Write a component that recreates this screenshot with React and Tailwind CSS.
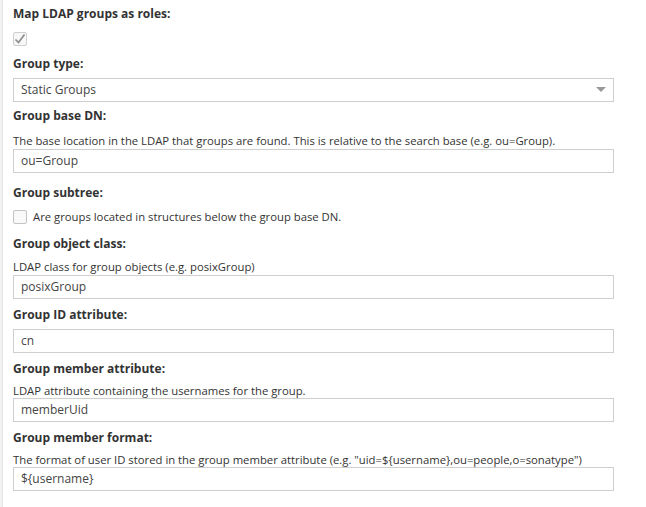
const font = { fontFamily: '"Open Sans", "Liberation Sans", sans-serif' };

function Label({ children, className = "" }) {
    return (
        <div className={`text-[12px] font-bold leading-4 text-[#333] ${className}`}>{children}</div>
    );
}

function Help({ children, className = "" }) {
    return <div className={`text-[11.3px] leading-[14px] text-[#333] ${className}`}>{children}</div>;
}

function TextField({ value, className = "" }) {
    return (
        <div
            className={`flex h-6 w-[601px] items-center border border-[#cfcfcf] bg-white px-[7px] text-[12px] text-[#444] ${className}`}
        >
            {value}
        </div>
    );
}

export default function App() {
    return (
        <div className="flex min-h-[507px] bg-white" style={font}>
            <div className="w-[3px] shrink-0 border-r border-[#e4e4e4] bg-[#f2f2f2]" />
            <div className="flex-1 pl-[10px] pt-[6px]">
                <Label>Map LDAP groups as roles:</Label>
                <div className="mt-[10px] flex h-[14px] w-[14px] items-center justify-center rounded-[2px] border border-[#cfcfcf] bg-[#f7f7f7]">
                    <svg width="12" height="12" viewBox="0 0 12 12">
                        <path d="M1.5 6.5 L4.5 9.5 L10.5 1.5" fill="none" stroke="#8a8a8a" strokeWidth="1.6" />
                    </svg>
                </div>

                <Label className="mt-[10px]">Group type:</Label>
                <div className="mt-[6px] flex h-6 w-[601px] items-center justify-between border border-[#cfcfcf] bg-white pl-[7px] pr-[7px] text-[12px] text-[#444]">
                    <span>Static Groups</span>
                    <svg width="10" height="6" viewBox="0 0 10 6">
                        <path d="M0 0 L10 0 L5 5 Z" fill="#999" />
                    </svg>
                </div>

                <Label className="mt-[6px]">Group base DN:</Label>
                <Help className="mt-[10px]">
                    The base location in the LDAP that groups are found. This is relative to the search base (e.g. ou=Group).
                </Help>
                <TextField value="ou=Group" className="mt-[1px]" />

                <Label className="mt-[12px]">Group subtree:</Label>
                <div className="mt-[9px] flex h-[14px] items-center gap-[6px]">
                    <div className="h-[14px] w-[14px] rounded-[2px] border border-[#c4c4c4] bg-[#f9f9f9]" />
                    <span className="text-[11.3px] leading-[14px] text-[#333]">
                        Are groups located in structures below the group base DN.
                    </span>
                </div>

                <Label className="mt-[12px]">Group object class:</Label>
                <Help className="mt-[8px]">LDAP class for group objects (e.g. posixGroup)</Help>
                <TextField value="posixGroup" className="mt-[1px]" />

                <Label className="mt-[8px]">Group ID attribute:</Label>
                <TextField value="cn" className="mt-[6px]" />

                <Label className="mt-[8px]">Group member attribute:</Label>
                <Help className="mt-[7px]">LDAP attribute containing the usernames for the group.</Help>
                <TextField value="memberUid" className="mt-0" />

                <Label className="mt-[8px]">Group member format:</Label>
                <Help className="mt-[7px]">
                    The format of user ID stored in the group member attribute (e.g. "uid=${"{"}username{"}"},ou=people,o=sonatype")
                </Help>
                <TextField value="${username}" className="mt-0" />
            </div>
        </div>
    );
}
